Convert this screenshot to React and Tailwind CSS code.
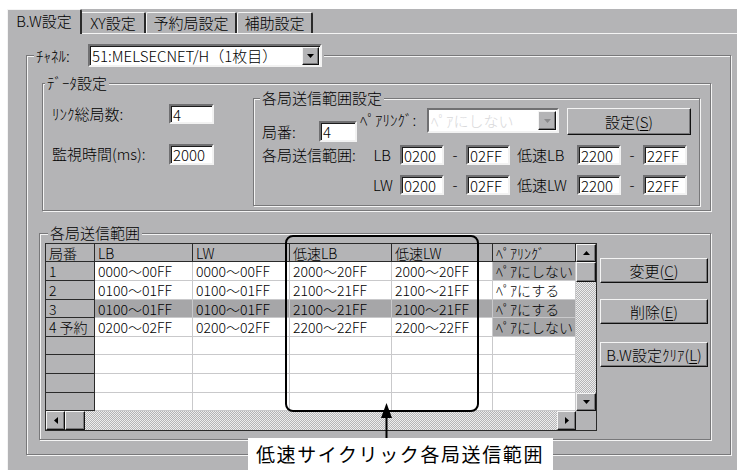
import React from 'react';

const FONT = "font-['Noto_Sans_CJK_JP',sans-serif]";

const Edit = ({ className = '', children }) => (
  <div
    className={`box-border flex items-center border-2 border-t-[#707072] border-l-[#707072] border-r-[#f2f2f2] border-b-[#f2f2f2] bg-white pl-[2px] leading-none shadow-[inset_1px_1px_0_#1c1c1c] ${className}`}
  >
    {children}
  </div>
);

const Btn = ({ className = '', children }) => (
  <div
    className={`box-border flex items-center justify-center border border-t-[#f4f4f4] border-l-[#f4f4f4] border-r-[#101010] border-b-[#101010] bg-[#b4b4b6] leading-none shadow-[inset_-1px_-1px_0_#78787a] ${className}`}
  >
    {children}
  </div>
);

const Arrow = ({ dir = 'down', color = '#000' }) => {
  const pts = {
    down: '0,0 7,0 3.5,4',
    up: '0,4 7,4 3.5,0',
    left: '4,0 4,7 0,3.5',
    right: '0,0 0,7 4,3.5',
  }[dir];
  const vert = dir === 'up' || dir === 'down';
  return (
    <svg width={vert ? 7 : 4} height={vert ? 4 : 7} viewBox={vert ? '0 0 7 4' : '0 0 4 7'}>
      <polygon points={pts} fill={color} />
    </svg>
  );
};

const Group = ({ className = '', label, labelClass = '', children }) => (
  <div
    className={`box-border border border-[#78787a] shadow-[1px_1px_0_#f4f4f4,inset_1px_1px_0_#f4f4f4] ${className}`}
  >
    <div className={`-mt-[10px] h-[18px] w-fit bg-[#b4b4b6] px-[2px] leading-[18px] ${labelClass}`}>
      {label}
    </div>
    {children}
  </div>
);

const u = (c) => <span className="underline underline-offset-2">{c}</span>;

const rows = [
  { no: '1', lb: '0000～00FF', lw: '0000～00FF', slb: '2000～20FF', slw: '2000～20FF', pair: 'ﾍﾟｱにしない', sel: false, pg: true, h: 'h-[19px]' },
  { no: '2', lb: '0100～01FF', lw: '0100～01FF', slb: '2100～21FF', slw: '2100～21FF', pair: 'ﾍﾟｱにする', sel: false, pg: false, h: 'h-[19px]' },
  { no: '3', lb: '0100～01FF', lw: '0100～01FF', slb: '2100～21FF', slw: '2100～21FF', pair: 'ﾍﾟｱにする', sel: true, pg: true, h: 'h-[18px]' },
  { no: '4 予約', lb: '0200～02FF', lw: '0200～02FF', slb: '2200～22FF', slw: '2200～22FF', pair: 'ﾍﾟｱにしない', sel: false, pg: true, h: 'h-[19px]' },
  { no: '', lb: '', lw: '', slb: '', slw: '', pair: '', sel: false, pg: false, h: 'h-[18px]' },
  { no: '', lb: '', lw: '', slb: '', slw: '', pair: '', sel: false, pg: false, h: 'h-[19px]' },
  { no: '', lb: '', lw: '', slb: '', slw: '', pair: '', sel: false, pg: false, h: 'h-[19px]' },
  { no: '', lb: '', lw: '', slb: '', slw: '', pair: '', sel: false, pg: false, h: 'h-[18px]' },
];

const Cell = ({ w, gray, children }) => (
  <div
    className={`box-border ${w} flex h-full shrink-0 items-center whitespace-nowrap border-r border-b border-[#c9c9cb] pl-[3px] leading-none ${gray ? 'bg-[#a6a6a8]' : 'bg-white'}`}
  >
    {children}
  </div>
);

const HeadCell = ({ w, children }) => (
  <div className={`box-border ${w} flex h-full shrink-0 items-center border-r border-b border-[#2a2a2a] bg-[#b4b4b6] pl-[3px] leading-none`}>
    {children}
  </div>
);

const Trough = ({ className = '' }) => (
  <div className={`bg-[repeating-conic-gradient(#b4b4b6_0%_25%,#ededed_0%_50%)] bg-[length:2px_2px] ${className}`} />
);

export default function App() {
  return (
    <div className={`relative h-[470px] w-[737px] overflow-hidden bg-white pl-[7px] pt-[9px] text-[15px] font-light leading-[18px] text-black ${FONT}`}>
      <div className="flex h-[461px] w-[730px] flex-col bg-[#b4b4b6]">
        {/* tabs */}
        <div className="flex h-[24px] shrink-0 items-end">
          <div className="relative z-10 -mb-px flex h-[25px] w-[75px] items-start justify-center rounded-tr-[2px] border-t border-l border-r-2 border-t-[#f4f4f4] border-l-[#f4f4f4] border-r-[#2a2a2a] bg-[#b4b4b6] pt-[2px]">
            B.W設定
          </div>
          <div className="flex h-[21px] w-[64px] items-start justify-center rounded-tr-[2px] border-t border-r-2 border-t-[#f4f4f4] border-r-[#2a2a2a] pt-[1px]">
            XY設定
          </div>
          <div className="flex h-[21px] w-[91px] items-start justify-center rounded-tl-[2px] rounded-tr-[2px] border-t border-l border-r-2 border-t-[#f4f4f4] border-l-[#f4f4f4] border-r-[#2a2a2a] pt-[1px]">
            予約局設定
          </div>
          <div className="flex h-[21px] w-[76px] items-start justify-center rounded-tl-[2px] rounded-tr-[2px] border-t border-l border-r-2 border-t-[#f4f4f4] border-l-[#f4f4f4] border-r-[#2a2a2a] pt-[1px]">
            補助設定
          </div>
        </div>

        {/* panel */}
        <div className="flex-1 border-t border-l border-[#f4f4f4] pl-[18px] pt-[21px]">
          <Group
            className="h-[400px] w-[705px]"
            labelClass="-mt-[12px] ml-[7px] flex h-[23px] items-center"
            label={
              <>
                <span className="w-[52px]">ﾁｬﾈﾙ:</span>
                <Edit className="h-[23px] w-[234px] justify-between pr-[1px]">
                  <span>51:MELSECNET/H（1枚目）</span>
                  <Btn className="h-[18px] w-[17px]">
                    <Arrow />
                  </Btn>
                </Edit>
              </>
            }
          >
            {/* data settings */}
            <Group className="ml-[15px] mt-[16px] h-[128px] w-[669px]" labelClass="ml-[2px]" label="ﾃﾞｰﾀ設定">
              <div className="flex">
                <div className="w-[210px] pl-[9px]">
                  <div className="mt-[12px] flex h-[20px] items-center">
                    <span className="w-[117px]">ﾘﾝｸ総局数:</span>
                    <Edit className="h-[20px] w-[45px]">4</Edit>
                  </div>
                  <div className="mt-[20px] flex h-[20px] items-center">
                    <span className="w-[117px]">監視時間(ms):</span>
                    <Edit className="h-[21px] w-[45px]">2000</Edit>
                  </div>
                </div>

                <Group className="mt-[6px] h-[108px] w-[447px]" labelClass="ml-[6px]" label="各局送信範囲設定">
                  <div className="pl-[8px]">
                    <div className="mt-px flex items-start">
                      <div className="mt-[13px] flex items-center">
                        <span className="w-[57px]">局番:</span>
                        <Edit className="h-[21px] w-[38px]">4</Edit>
                      </div>
                      <span className="ml-[3px] mt-[3px] w-[67px] whitespace-nowrap">ﾍﾟｱﾘﾝｸﾞ:</span>
                      <Edit className="h-[25px] w-[132px] justify-between border-t-[#8a8a8c] border-l-[#8a8a8c] bg-[#b4b4b6] pr-[1px] text-[#d8d8da] shadow-none">
                        <span>ﾍﾟｱにしない</span>
                        <Btn className="h-[19px] w-[18px]">
                          <Arrow color="#8a8a8c" />
                        </Btn>
                      </Edit>
                      <Btn className="ml-[8px] h-[27px] w-[124px]">設定{'('}{u('S')}{')'}</Btn>
                    </div>

                    {[
                      ['各局送信範囲:', 'LB', '低速LB', '0200', '02FF', '2200', '22FF', 'mt-[3px]'],
                      ['', 'LW', '低速LW', '0200', '02FF', '2200', '22FF', 'mt-[10px]'],
                    ].map((r) => (
                      <div key={r[1]} className={`flex h-[20px] items-center ${r[7]}`}>
                        <span className="w-[111px]">{r[0]}</span>
                        <span className="w-[27px] pr-[9px] text-right">{r[1]}</span>
                        <Edit className="h-[20px] w-[44px]">{r[3]}</Edit>
                        <span className="w-[22px] text-center">-</span>
                        <Edit className="h-[20px] w-[44px]">{r[4]}</Edit>
                        <span className="w-[67px] pl-[7px]">{r[2]}</span>
                        <Edit className="h-[20px] w-[44px]">{r[5]}</Edit>
                        <span className="w-[22px] text-center">-</span>
                        <Edit className="h-[20px] w-[44px]">{r[6]}</Edit>
                      </div>
                    ))}
                  </div>
                </Group>
              </div>
            </Group>

            {/* range table */}
            <Group className="ml-[12px] mt-[22px] h-[207px] w-[672px]" labelClass="ml-[8px]" label="各局送信範囲">
              <div className="flex">
                <div className="ml-[5px] mt-px box-border h-[188px] w-[552px] border border-[#2a2a2a] text-[14px]">
                  <div className="flex h-[167px]">
                    <div className="w-[530px] bg-white">
                      <div className="flex h-[18px]">
                        <HeadCell w="w-[49px]">局番</HeadCell>
                        <HeadCell w="w-[98px]">LB</HeadCell>
                        <HeadCell w="w-[97px]">LW</HeadCell>
                        <HeadCell w="w-[102px]">低速LB</HeadCell>
                        <HeadCell w="w-[101px]">低速LW</HeadCell>
                        <HeadCell w="w-[83px]">ﾍﾟｱﾘﾝｸﾞ</HeadCell>
                      </div>
                      {rows.map((r, i) => (
                        <div key={i} className={`flex ${r.h}`}>
                          <div className="box-border flex h-full w-[49px] shrink-0 items-center whitespace-nowrap border-r border-b border-[#2a2a2a] bg-[#b4b4b6] pl-[3px] leading-none">
                            {r.no}
                          </div>
                          <Cell w="w-[98px]" gray={r.sel}>{r.lb}</Cell>
                          <Cell w="w-[97px]" gray={r.sel}>{r.lw}</Cell>
                          <Cell w="w-[102px]" gray={r.sel}>{r.slb}</Cell>
                          <Cell w="w-[101px]" gray={r.sel}>{r.slw}</Cell>
                          <Cell w="w-[83px]" gray={r.sel || r.pg}>{r.pair}</Cell>
                        </div>
                      ))}
                    </div>
                    <div className="flex w-[20px] flex-col">
                      <Btn className="h-[18px] w-[20px]"><Arrow dir="up" /></Btn>
                      <Btn className="h-[20px] w-[20px]" />
                      <Trough className="flex-1" />
                      <Btn className="h-[18px] w-[20px]"><Arrow /></Btn>
                    </div>
                  </div>
                  <div className="flex h-[19px]">
                    <Btn className="h-[19px] w-[19px]"><Arrow dir="left" /></Btn>
                    <Btn className="h-[19px] w-[20px]" />
                    <Trough className="flex-1" />
                    <Btn className="h-[19px] w-[19px]"><Arrow dir="right" /></Btn>
                    <div className="w-[20px] bg-[#b4b4b6]" />
                  </div>
                </div>

                <div className="ml-[3px] flex flex-col">
                  <Btn className="mt-[16px] h-[25px] w-[108px]">変更{'('}{u('C')}{')'}</Btn>
                  <Btn className="mt-[16px] h-[25px] w-[108px]">削除{'('}{u('E')}{')'}</Btn>
                  <Btn className="mt-[18px] h-[25px] w-[108px]">B.W設定ｸﾘｱ{'('}{u('L')}{')'}</Btn>
                </div>
              </div>
            </Group>
          </Group>
        </div>
      </div>

      {/* callout */}
      <div className="absolute left-[285px] top-[235px] h-[177px] w-[194px] rounded-[8px] border-2 border-black" />
      <svg className="absolute left-[381px] top-[403px]" width="11" height="36" viewBox="0 0 11 36">
        <polygon points="5.5,0 0,15 11,15" fill="#000" />
        <rect x="4.5" y="14" width="2" height="22" fill="#000" />
      </svg>
      <div className="absolute left-[248px] top-[438px] flex h-[32px] w-[305px] items-center bg-white pl-[8px] text-[19px] font-normal tracking-[1.6px]">
        低速サイクリック各局送信範囲
      </div>
    </div>
  );
}
